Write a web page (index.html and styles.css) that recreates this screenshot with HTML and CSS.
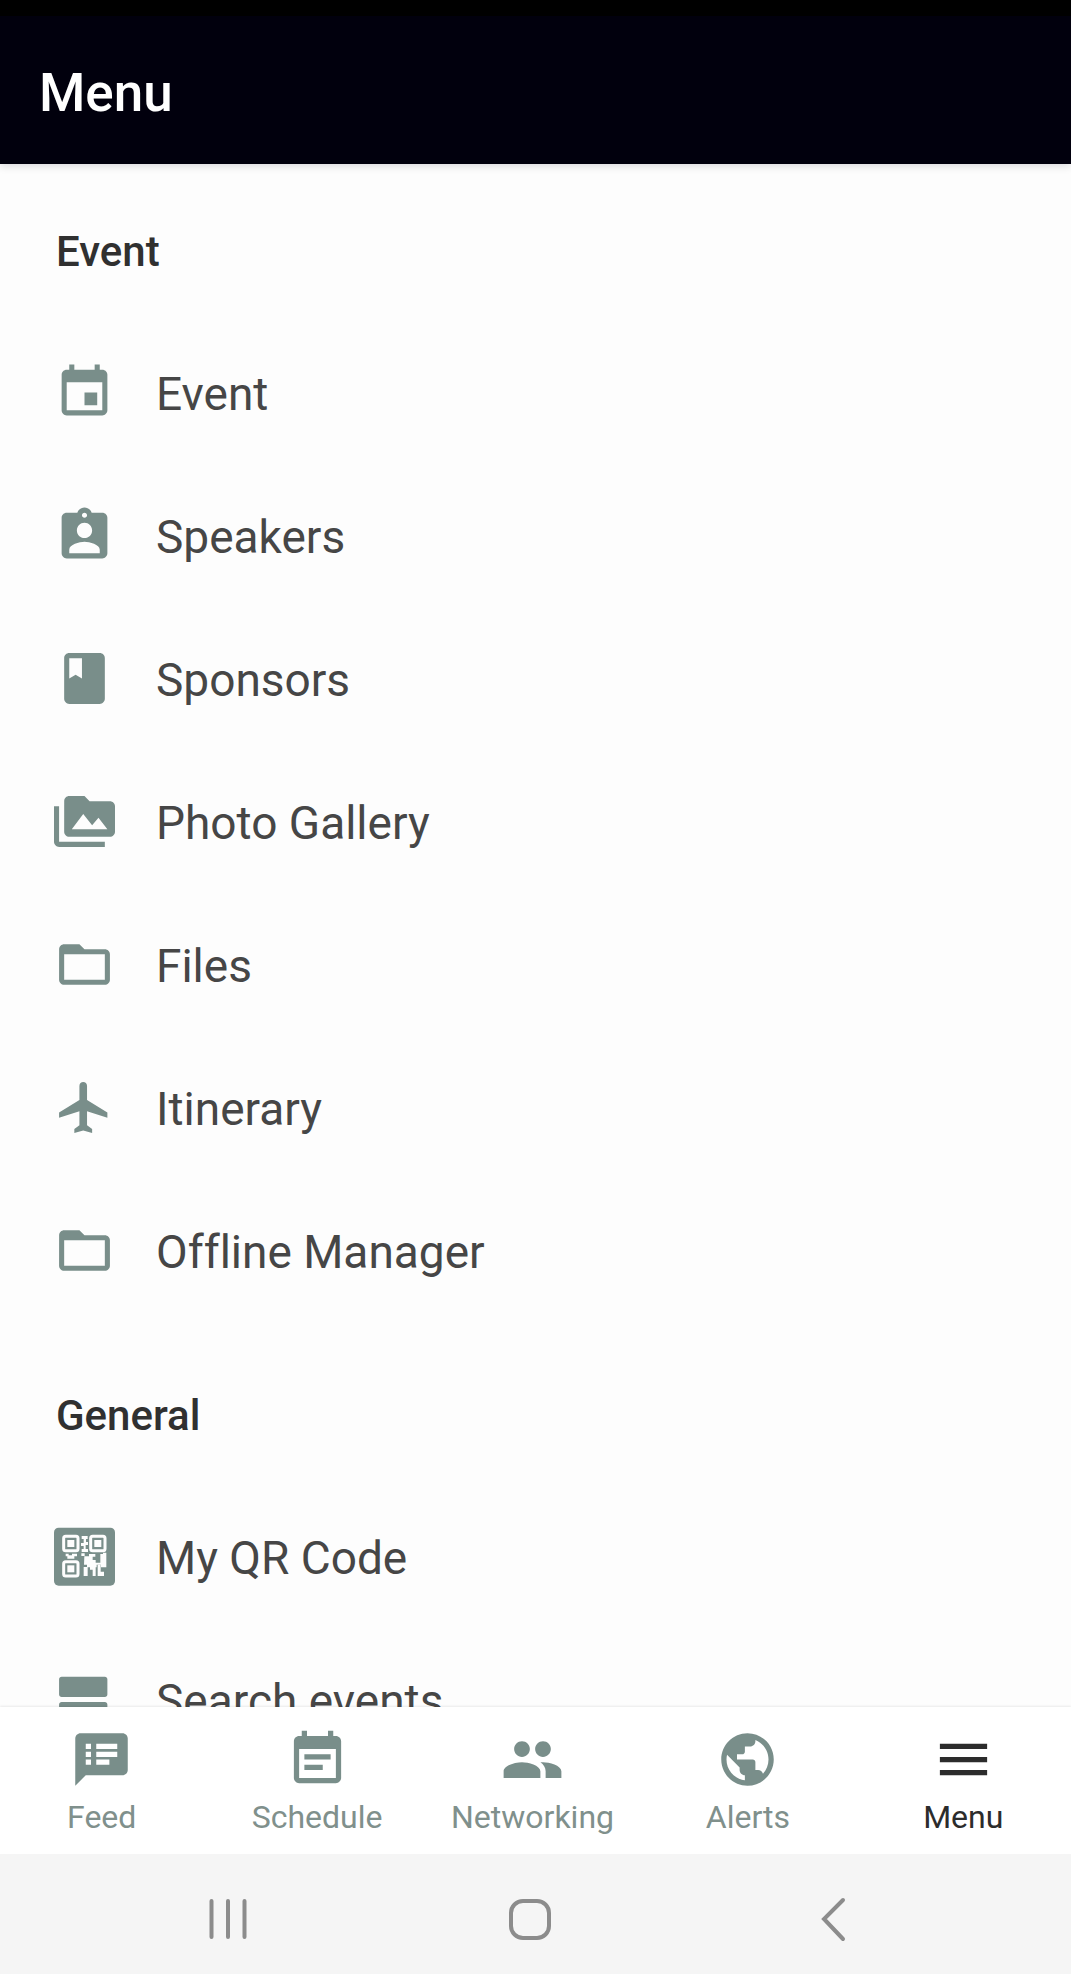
FILE: index.html
```html
<!DOCTYPE html>
<html lang="en">
<head>
    <meta charset="UTF-8">
    <meta name="viewport" content="width=device-width, initial-scale=1.0">
    <title>Menu</title>
    <link rel="stylesheet" href="styles.css">
</head>
<body>
    <header class="app-bar">
        <h1>Menu</h1>
    </header>

    <main class="menu">
        <section class="menu-section">
            <h2>Event</h2>
            <ul>
                <li><a class="menu-item" href="#event">
                    <svg viewBox="0 0 24 24" aria-hidden="true"><path d="M17 12h-5v5h5v-5zM16 1v2H8V1H6v2H5c-1.11 0-1.99.9-1.99 2L3 19c0 1.1.89 2 2 2h14c1.1 0 2-.9 2-2V5c0-1.1-.9-2-2-2h-1V1h-2zm3 18H5V8h14v11z"/></svg>
                    <span>Event</span>
                </a></li>
                <li><a class="menu-item" href="#speakers">
                    <svg viewBox="0 0 24 24" aria-hidden="true"><path d="M19 3h-4.18C14.4 1.84 13.3 1 12 1c-1.3 0-2.4.84-2.82 2H5c-1.1 0-2 .9-2 2v14c0 1.1.9 2 2 2h14c1.1 0 2-.9 2-2V5c0-1.1-.9-2-2-2zm-7 0c.55 0 1 .45 1 1s-.45 1-1 1-1-.45-1-1 .45-1 1-1zm0 4c1.66 0 3 1.34 3 3s-1.34 3-3 3-3-1.34-3-3 1.34-3 3-3zm6 12H6v-1.4c0-2 4-3.1 6-3.1s6 1.1 6 3.1V19z"/></svg>
                    <span>Speakers</span>
                </a></li>
                <li><a class="menu-item" href="#sponsors">
                    <svg viewBox="0 0 24 24" aria-hidden="true"><path d="M18 2H6c-1.1 0-2 .9-2 2v16c0 1.1.9 2 2 2h12c1.1 0 2-.9 2-2V4c0-1.1-.9-2-2-2zM6 4h5v8l-2.5-1.5L6 12V4z"/></svg>
                    <span>Sponsors</span>
                </a></li>
                <li><a class="menu-item" href="#photos">
                    <svg viewBox="0 0 24 24" aria-hidden="true"><path d="M2 6H0v14c0 1.1.9 2 2 2h18v-2H2V6zm20-2h-8l-2-2H6c-1.1 0-1.99.9-1.99 2L4 16c0 1.1.9 2 2 2h16c1.1 0 2-.9 2-2V6c0-1.1-.9-2-2-2zM7 15l4.5-6 3.5 4.51 2.5-3.01L21 15H7z"/></svg>
                    <span>Photo Gallery</span>
                </a></li>
                <li><a class="menu-item" href="#files">
                    <svg viewBox="0 0 24 24" aria-hidden="true"><path d="M20 6h-8l-2-2H4c-1.1 0-1.99.9-1.99 2L2 18c0 1.1.9 2 2 2h16c1.1 0 2-.9 2-2V8c0-1.1-.9-2-2-2zm0 12H4V8h16v10z"/></svg>
                    <span>Files</span>
                </a></li>
                <li><a class="menu-item" href="#itinerary">
                    <svg viewBox="0 0 24 24" aria-hidden="true"><path d="M21 16v-2l-8-5V3.5c0-.83-.67-1.5-1.5-1.5S10 2.67 10 3.5V9l-8 5v2l8-2.5V19l-2 1.5V22l3.5-1 3.5 1v-1.5L13 19v-5.5l8 2.5z"/></svg>
                    <span>Itinerary</span>
                </a></li>
                <li><a class="menu-item" href="#offline">
                    <svg viewBox="0 0 24 24" aria-hidden="true"><path d="M20 6h-8l-2-2H4c-1.1 0-1.99.9-1.99 2L2 18c0 1.1.9 2 2 2h16c1.1 0 2-.9 2-2V8c0-1.1-.9-2-2-2zm0 12H4V8h16v10z"/></svg>
                    <span>Offline Manager</span>
                </a></li>
            </ul>
        </section>

        <section class="menu-section">
            <h2>General</h2>
            <ul>
                <li><a class="menu-item" href="#qr">
                    <svg viewBox="0 -4 183 183" aria-hidden="true">
                        <rect y="1" width="183" height="174" rx="14"/>
                        <g class="qr-ring">
                            <rect x="29" y="27" width="43" height="43" rx="6"/>
                            <rect x="110" y="27" width="43" height="43" rx="6"/>
                            <rect x="29" y="103" width="43" height="43" rx="6"/>
                        </g>
                        <g class="qr-dot">
                            <rect x="40" y="38" width="21" height="21"/>
                            <rect x="121" y="38" width="21" height="21"/>
                            <rect x="40" y="114" width="21" height="21"/>
                            <path d="M83 26h18v9h-5v9h6v9h-7v12h7v9H83v-9h6v-9h-8v-9h8V35h-6z"/>
                            <path d="M35 79h9v5h10v-5h15v8h-8v7H40v-7h-5z"/>
                            <path d="M82 78h10v8h-10zM91 87h14v-7h19v8h-8v10h9v8h14V80h8v-4h10v44h-16v-8h-13v8H99v-8h-9z"/>
                            <path d="M89 119h12v27H89zM108 119h17v27h-9v-19h-8zM131 112h9v21h10v13h-19z"/>
                        </g>
                    </svg>
                    <span>My QR Code</span>
                </a></li>
                <li><a class="menu-item" href="#search">
                    <svg viewBox="0 0 24 24" aria-hidden="true"><path d="M20 13H3c-.55 0-1 .45-1 1v6c0 .55.45 1 1 1h17c.55 0 1-.45 1-1v-6c0-.55-.45-1-1-1zm0-10H3c-.55 0-1 .45-1 1v6c0 .55.45 1 1 1h17c.55 0 1-.45 1-1V4c0-.55-.45-1-1-1z"/></svg>
                    <span>Search events</span>
                </a></li>
            </ul>
        </section>
    </main>

    <nav class="tab-bar" aria-label="Main">
        <ul>
            <li><a class="tab" href="#feed">
                <svg viewBox="0 0 24 24" aria-hidden="true"><path d="M20 2H4c-1.1 0-1.99.9-1.99 2L2 22l4-4h14c1.1 0 2-.9 2-2V4c0-1.1-.9-2-2-2zM8 14H6v-2h2v2zm0-3H6V9h2v2zm0-3H6V6h2v2zm7 6h-5v-2h5v2zm3-3h-8V9h8v2zm0-3h-8V6h8v2z"/></svg>
                <span>Feed</span>
            </a></li>
            <li><a class="tab" href="#schedule">
                <svg viewBox="0 0 24 24" aria-hidden="true"><path d="M17 10H7v2h10v-2zm2-7h-1V1h-2v2H8V1H6v2H5c-1.11 0-1.99.9-1.99 2L3 19c0 1.1.89 2 2 2h14c1.1 0 2-.9 2-2V5c0-1.1-.9-2-2-2zm0 16H5V8h14v11zm-5-5H7v2h7v-2z"/></svg>
                <span>Schedule</span>
            </a></li>
            <li><a class="tab" href="#networking">
                <svg viewBox="0 0 24 24" aria-hidden="true"><path d="M16 11c1.66 0 2.99-1.34 2.99-3S17.66 5 16 5c-1.66 0-3 1.34-3 3s1.34 3 3 3zm-8 0c1.66 0 2.99-1.34 2.99-3S9.66 5 8 5C6.34 5 5 6.34 5 8s1.34 3 3 3zm0 2c-2.33 0-7 1.17-7 3.5V19h14v-2.5c0-2.33-4.67-3.5-7-3.5zm8 0c-.29 0-.62.02-.97.05 1.16.84 1.97 1.97 1.97 3.45V19h6v-2.5c0-2.33-4.67-3.5-7-3.5z"/></svg>
                <span>Networking</span>
            </a></li>
            <li><a class="tab" href="#alerts">
                <svg viewBox="0 0 24 24" aria-hidden="true"><path d="M12 2C6.48 2 2 6.48 2 12s4.48 10 10 10 10-4.48 10-10S17.52 2 12 2zm-1 17.93c-3.95-.49-7-3.85-7-7.93 0-.62.08-1.21.21-1.79L9 15v1c0 1.1.9 2 2 2v1.93zm6.9-2.54c-.26-.81-1-1.39-1.9-1.39h-1v-3c0-.55-.45-1-1-1H8v-2h2c.55 0 1-.45 1-1V7h2c1.1 0 2-.9 2-2v-.41c2.93 1.19 5 4.06 5 7.41 0 2.08-.8 3.97-2.1 5.39z"/></svg>
                <span>Alerts</span>
            </a></li>
            <li><a class="tab active" href="#menu" aria-current="page">
                <svg viewBox="0 0 24 24" aria-hidden="true"><path d="M3 18h18v-2H3v2zm0-5h18v-2H3v2zm0-7v2h18V6H3z"/></svg>
                <span>Menu</span>
            </a></li>
        </ul>
    </nav>

    <footer class="system-bar">
        <button type="button" aria-label="Recent apps">
            <svg viewBox="0 0 48 48"><path d="M7.500 6v36M24 6v36M40.500 6v36"/></svg>
        </button>
        <button type="button" aria-label="Home">
            <svg viewBox="0 0 48 48"><rect x="5" y="6" width="38" height="37" rx="12"/></svg>
        </button>
        <button type="button" aria-label="Back">
            <svg viewBox="0 0 48 48"><path d="M34 5L15 24l19 20"/></svg>
        </button>
    </footer>
</body>
</html>
```

FILE: styles.css
```css
* {
    box-sizing: border-box;
}
body {
    display: flex;
    flex-direction: column;
    height: 100vh;
    margin: 0;
    font-family: Roboto, sans-serif;
    font-variant-ligatures: none;
    background: #fdfdfd;
    color: #464646;
}
ul {
    list-style: none;
    margin: 0;
    padding: 0;
}
a {
    color: inherit;
    text-decoration: none;
}

/* header */
.app-bar {
    display: flex;
    align-items: center;
    flex: none;
    height: 164px;
    padding: 6px 39px 0;
    border-top: 16px solid #000;
    background: #01000d;
    color: #fff;
    box-shadow: 0 2px 8px rgba(0,0,30,0.15);
}
.app-bar h1 {
    margin: 0;
    font-size: 53px;
    font-weight: 500;
    line-height: 64px;
}

/* scrolling menu list */
.menu {
    flex: 1;
    min-height: 0;
    overflow: hidden;
    padding-top: 18px;
}
.menu-section {
    margin-bottom: 23px;
}
.menu-section h2 {
    margin: 0;
    padding: 0 56px;
    font-size: 42px;
    font-weight: 500;
    line-height: 140px;
    color: #303030;
}
.menu-item {
    display: flex;
    align-items: center;
    gap: 41px;
    height: 143px;
    padding: 0 54px;
    font-size: 46px;
}
.menu-item svg {
    flex: none;
    width: 61px;
    height: 61px;
    margin-bottom: 2px;
    fill: #798e8a;
}
.menu-item .qr-ring {
    fill: none;
    stroke: #fdfdfd;
    stroke-width: 9;
}
.menu-item .qr-dot {
    fill: #fdfdfd;
}

/* bottom tabs */
.tab-bar {
    flex: none;
    height: 147px;
    padding-top: 21px;
    background: #fff;
    box-shadow: 0 -1px 2px rgba(0,0,0,0.08);
}
.tab-bar ul {
    display: grid;
    grid-template-columns: repeat(5, 1fr);
    margin-left: -6px;
}
.tab {
    display: flex;
    flex-direction: column;
    align-items: center;
    gap: 6px;
    font-size: 32px;
    line-height: 40px;
    color: #80908c;
}
.tab svg {
    width: 63px;
    height: 63px;
    fill: #798e8a;
}
.tab.active {
    color: #2c2c2c;
}
.tab.active svg {
    fill: #2c2c2c;
}

/* device navigation */
.system-bar {
    display: grid;
    grid-template-columns: repeat(3, 1fr);
    flex: none;
    height: 120px;
    padding: 10px 87px 0 77px;
    background: #f5f5f5;
}
.system-bar button {
    display: flex;
    align-items: center;
    justify-content: center;
    height: 110px;
    padding: 0;
    border: 0;
    background: none;
}
.system-bar svg {
    width: 48px;
    height: 48px;
    fill: none;
    stroke: #8c8c8c;
    stroke-width: 4;
    stroke-linecap: round;
}
```
